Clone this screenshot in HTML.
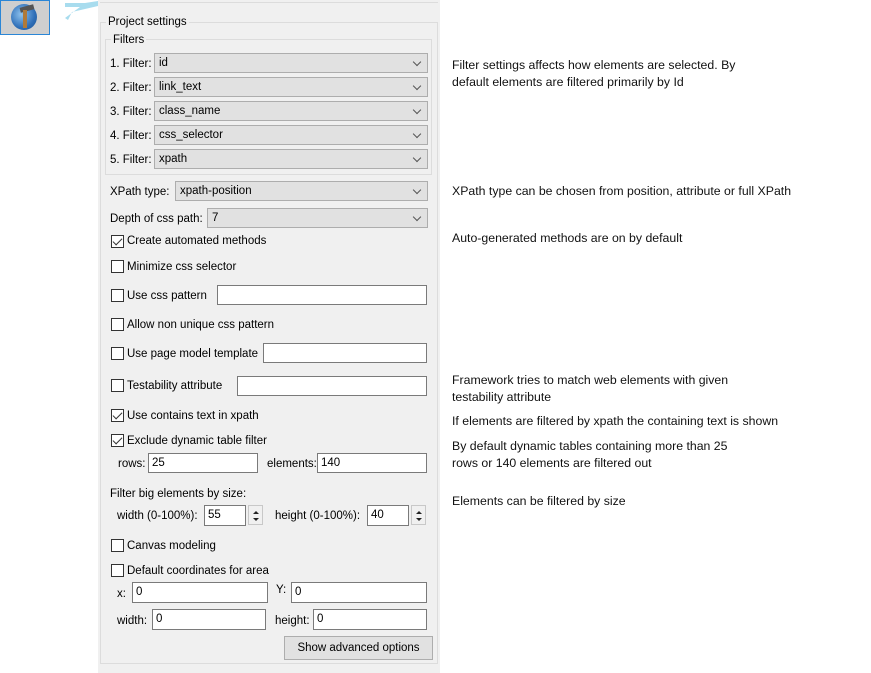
<!DOCTYPE html>
<html><head><meta charset="utf-8"><style>
*{margin:0;padding:0;box-sizing:border-box}
body{width:871px;height:673px;background:#fff;position:relative;overflow:hidden;font-family:"Liberation Sans",sans-serif;font-size:11.5px;color:#000}
.a{position:absolute;white-space:nowrap}
.panel{position:absolute;left:98px;top:0;width:342px;height:673px;background:#f0f0f0}
.grp{position:absolute;border:1px solid #dcdcdc}
.lbl{position:absolute;background:#f0f0f0;padding:0 2px;font-size:11.5px}
.cb{position:absolute;left:0;top:0;height:20px;border:1px solid #adadad;background:#e1e1e1;padding:0 4px;line-height:18px;font-size:11.5px}
.cb:after{content:"";position:absolute;right:7px;top:5px;width:5px;height:5px;border-right:1px solid #555;border-bottom:1px solid #555;transform:rotate(45deg)}
.in{position:absolute;border:1px solid #7a7a7a;background:#fff;padding:0 3px;line-height:18px;font-size:11.5px}
.ck{position:absolute;width:13px;height:13px;border:1px solid #333;background:#fff}
.ck.on:after{content:"";position:absolute;left:3px;top:0px;width:4px;height:8px;border-right:1.5px solid #333;border-bottom:1.5px solid #333;transform:rotate(45deg)}
.sp{position:absolute;width:15px;height:20px;border:1px solid #c8c8c8;background:#f0f0f0}
.sp:before{content:"";position:absolute;left:4px;top:2px;border:3px solid transparent;border-bottom:3px solid #222}
.sp:after{content:"";position:absolute;left:4px;top:12px;border:3px solid transparent;border-top:3px solid #222}
.r{position:absolute;left:452px;font-size:12.3px;color:#111;white-space:nowrap;line-height:17px}
</style></head><body>
<div class="a" style="left:0;top:0;width:50px;height:35px;background:#cfcfcf;border:1px solid #2b86d6"></div>
<div class="a" style="left:11px;top:4px;width:26px;height:26px;border-radius:50%;background:radial-gradient(circle at 40% 40%,#8fc3ee,#2f6fb8 60%,#1a4f8f)"></div>
<div class="a" style="left:20px;top:6px;width:14px;height:5px;background:#555;transform:rotate(-15deg)"></div>
<div class="a" style="left:23px;top:10px;width:4px;height:18px;background:#b07a3a"></div>
<svg class="a" style="left:50px;top:0" width="50" height="22"><polygon points="15,3 35,3 48,1 48,6 22,12 18,20 15,18 30,7 15,7" fill="#a8dcee"/></svg>
<div class="panel"></div>
<div class="a" style="left:100px;top:2px;width:338px;height:1px;background:#dcdcdc"></div>
<div class="grp" style="left:100px;top:22px;width:338px;height:642px"></div>
<div class="lbl" style="left:106px;top:16px">Project settings</div>
<div class="grp" style="left:105px;top:39px;width:327px;height:136px"></div>
<div class="lbl" style="left:111px;top:34px">Filters</div>

<div class="a" style="left:110px;top:58px">1. Filter:</div><div class="cb" style="left:154px;top:53px;width:274px">id</div>
<div class="a" style="left:110px;top:82px">2. Filter:</div><div class="cb" style="left:154px;top:77px;width:274px">link_text</div>
<div class="a" style="left:110px;top:106px">3. Filter:</div><div class="cb" style="left:154px;top:101px;width:274px">class_name</div>
<div class="a" style="left:110px;top:130px">4. Filter:</div><div class="cb" style="left:154px;top:125px;width:274px">css_selector</div>
<div class="a" style="left:110px;top:154px">5. Filter:</div><div class="cb" style="left:154px;top:149px;width:274px">xpath</div>

<div class="a" style="left:110px;top:186px">XPath type:</div><div class="cb" style="left:175px;top:181px;width:253px">xpath-position</div>
<div class="a" style="left:110px;top:213px">Depth of css path:</div><div class="cb" style="left:207px;top:208px;width:221px">7</div>

<div class="ck on" style="left:111px;top:235px"></div><div class="a" style="left:127px;top:235px">Create automated methods</div>
<div class="ck" style="left:111px;top:260px"></div><div class="a" style="left:127px;top:261px">Minimize css selector</div>
<div class="ck" style="left:111px;top:289px"></div><div class="a" style="left:127px;top:290px">Use css pattern</div><div class="in" style="left:217px;top:285px;width:210px;height:20px"></div>
<div class="ck" style="left:111px;top:318px"></div><div class="a" style="left:127px;top:319px">Allow non unique css pattern</div>
<div class="ck" style="left:111px;top:347px"></div><div class="a" style="left:127px;top:348px">Use page model template</div><div class="in" style="left:263px;top:343px;width:164px;height:20px"></div>
<div class="ck" style="left:111px;top:379px"></div><div class="a" style="left:127px;top:380px">Testability attribute</div><div class="in" style="left:237px;top:376px;width:190px;height:20px"></div>
<div class="ck on" style="left:111px;top:409px"></div><div class="a" style="left:127px;top:410px">Use contains text in xpath</div>
<div class="ck on" style="left:111px;top:434px"></div><div class="a" style="left:127px;top:435px">Exclude dynamic table filter</div>
<div class="a" style="left:118px;top:458px">rows:</div><div class="in" style="left:148px;top:453px;width:110px;height:20px">25</div>
<div class="a" style="left:267px;top:458px">elements:</div><div class="in" style="left:317px;top:453px;width:110px;height:20px">140</div>

<div class="a" style="left:110px;top:488px">Filter big elements by size:</div>
<div class="a" style="left:117px;top:510px">width (0-100%):</div><div class="in" style="left:204px;top:505px;width:42px;height:21px">55</div><div class="sp" style="left:248px;top:505px"></div>
<div class="a" style="left:275px;top:510px">height (0-100%):</div><div class="in" style="left:367px;top:505px;width:42px;height:21px">40</div><div class="sp" style="left:411px;top:505px"></div>

<div class="ck" style="left:111px;top:539px"></div><div class="a" style="left:127px;top:540px">Canvas modeling</div>
<div class="ck" style="left:111px;top:564px"></div><div class="a" style="left:127px;top:565px">Default coordinates for area</div>
<div class="a" style="left:117px;top:588px">x:</div><div class="in" style="left:132px;top:582px;width:136px;height:21px">0</div>
<div class="a" style="left:276px;top:584px">Y:</div><div class="in" style="left:291px;top:582px;width:136px;height:21px">0</div>
<div class="a" style="left:117px;top:615px">width:</div><div class="in" style="left:152px;top:609px;width:114px;height:21px">0</div>
<div class="a" style="left:275px;top:615px">height:</div><div class="in" style="left:313px;top:609px;width:114px;height:21px">0</div>
<div class="a" style="left:284px;top:636px;width:149px;height:24px;background:#e1e1e1;border:1px solid #adadad;text-align:center;line-height:22px">Show advanced options</div>

<div class="r" style="top:57px">Filter settings affects how elements are selected. By<br>default elements are filtered primarily by Id</div>
<div class="r" style="top:183px">XPath type can be chosen from position, attribute or full XPath</div>
<div class="r" style="top:230px">Auto-generated methods are on by default</div>
<div class="r" style="top:372px">Framework tries to match web elements with given<br>testability attribute</div>
<div class="r" style="top:413px">If elements are filtered by xpath the containing text is shown</div>
<div class="r" style="top:438px">By default dynamic tables containing more than 25<br>rows or 140 elements are filtered out</div>
<div class="r" style="top:493px">Elements can be filtered by size</div>
</body></html>
